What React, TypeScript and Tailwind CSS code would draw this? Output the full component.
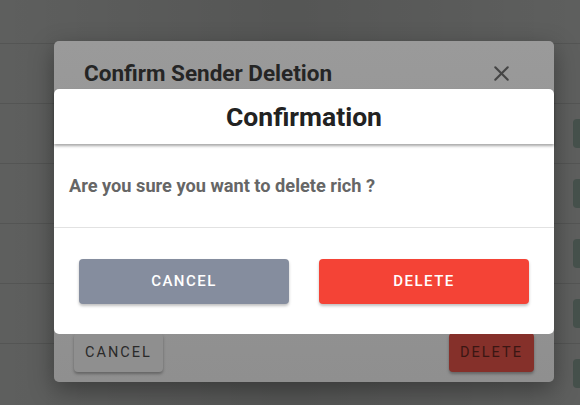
import { X } from "lucide-react";

const rows = [0, 1, 2, 3, 4, 5];

export default function App() {
  return (
    <div
      className="relative w-[580px] h-[405px] overflow-hidden bg-[#5e5f5e]"
      style={{ fontFamily: "Roboto, 'Liberation Sans', sans-serif" }}
    >
      {/* background table rows */}
      <div className="flex flex-col pt-[43px]">
        {rows.map((r) => (
          <div key={r} className="h-[60px] border-t border-[#545554] flex items-start justify-end pt-[15px]">
            {r > 0 && <div className="w-[7px] h-[29px] rounded-l-[4px] bg-[#46514c]" />}
          </div>
        ))}
      </div>
      <div className="absolute inset-0 bg-gradient-to-r from-transparent via-black/10 to-transparent" />

      {/* outer dialog, dimmed */}
      <div className="absolute left-[54px] top-[41px] w-[500px] h-[341px] rounded-[5px] bg-gradient-to-b from-[#9a9a9a] to-[#8f8f8f] shadow-[0_8px_24px_rgba(0,0,0,0.35)]">
        <div className="flex items-center justify-between pl-[30px] pr-[40px] pt-[16px]">
          <span className="text-[22.5px] font-bold text-[#252525]">Confirm Sender Deletion</span>
          <X size={25} strokeWidth={2} className="text-[#454545]" />
        </div>
        <div className="absolute left-[20px] right-[20px] bottom-[10px] flex justify-between">
          <button className="h-[39px] px-[11px] rounded-[4px] bg-[#8f8f8f] text-[14.5px] tracking-[0.14em] text-[#2a2a2a] shadow-[0_2px_3px_rgba(0,0,0,0.3)]">
            CANCEL
          </button>
          <button className="h-[39px] px-[11px] rounded-[4px] bg-[#85302a] text-[14.5px] tracking-[0.14em] text-[#3a1613] shadow-[0_2px_3px_rgba(0,0,0,0.3)]">
            DELETE
          </button>
        </div>
      </div>

      {/* confirmation dialog */}
      <div className="absolute left-[54px] top-[89px] w-[500px] h-[245px] rounded-[5px] bg-white flex flex-col">
        <div className="h-[55px] flex items-center justify-center shadow-[0_2px_3px_rgba(0,0,0,0.35)] rounded-t-[5px]">
          <span className="text-[26.5px] font-bold text-[#222]">Confirmation</span>
        </div>
        <div className="h-[84px] flex items-center pl-[15px] border-b border-[#e2e2e2]">
          <span className="text-[18.2px] font-bold text-[#666]">Are you sure you want to delete rich ?</span>
        </div>
        <div className="flex gap-[30px] px-[25px] pt-[31px]">
          <button className="w-[210px] h-[45px] rounded-[4px] bg-[#858d9e] text-white text-[15px] font-medium tracking-[0.1em] shadow-[0_2px_3px_rgba(0,0,0,0.25)]">
            CANCEL
          </button>
          <button className="w-[210px] h-[45px] rounded-[4px] bg-[#f44336] text-white text-[15px] font-medium tracking-[0.1em] shadow-[0_2px_3px_rgba(0,0,0,0.25)]">
            DELETE
          </button>
        </div>
      </div>
    </div>
  );
}
